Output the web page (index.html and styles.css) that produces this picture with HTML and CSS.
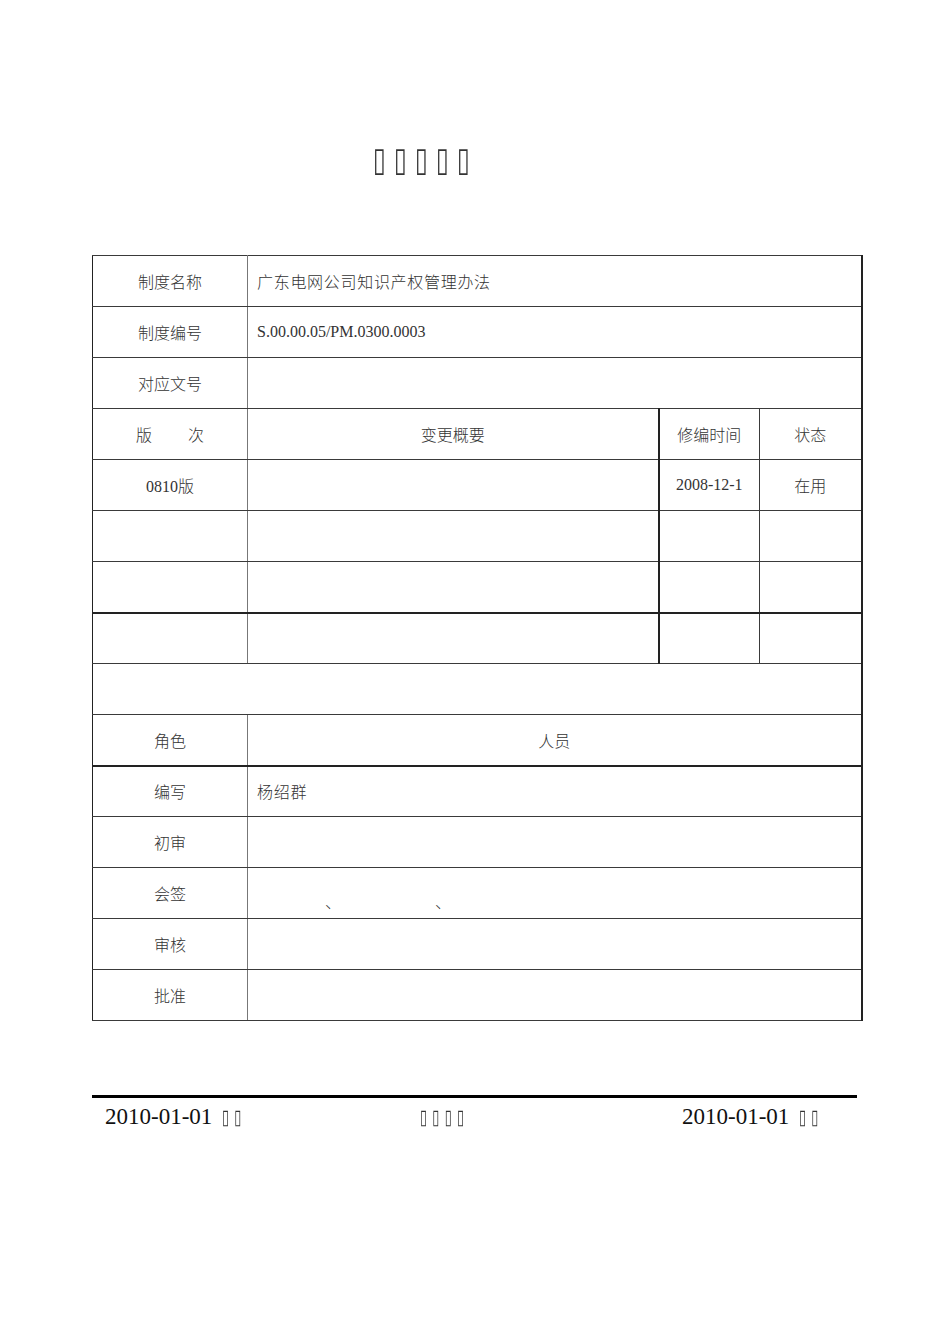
FILE: index.html
```html
<!DOCTYPE html>
<html lang="zh-CN">
<head>
<meta charset="utf-8">
<title>文件</title>
<link rel="stylesheet" href="styles.css">
</head>
<body>
<div class="page">
  <h1 class="title"><span class="tofu">▯▯▯▯▯</span></h1>
  <table class="sheet">
    <colgroup>
      <col class="c1"><col class="c2"><col class="c3"><col class="c4">
    </colgroup>
    <tr><td class="lab">制度名称</td><td class="val" colspan="3">广东电网公司知识产权管理办法</td></tr>
    <tr><td class="lab">制度编号</td><td class="val num" colspan="3">S.00.00.05/PM.0300.0003</td></tr>
    <tr><td class="lab">对应文号</td><td class="val" colspan="3"></td></tr>
    <tr><td class="lab">版<span class="gap"></span>次</td><td class="ctr">变更概要</td><td class="ctr thickl">修编时间</td><td class="ctr">状态</td></tr>
    <tr><td class="lab num">0810<span class="cjk">版</span></td><td></td><td class="ctr num thickl">2008-12-1</td><td class="ctr">在用</td></tr>
    <tr><td></td><td></td><td class="thickl"></td><td></td></tr>
    <tr class="thickb"><td></td><td></td><td class="thickl"></td><td></td></tr>
    <tr><td></td><td></td><td class="thickl"></td><td></td></tr>
    <tr><td colspan="4"></td></tr>
    <tr class="thickb"><td class="lab">角色</td><td class="ctr" colspan="3">人员</td></tr>
    <tr><td class="lab">编写</td><td class="val" colspan="3">杨绍群</td></tr>
    <tr><td class="lab">初审</td><td class="val" colspan="3"></td></tr>
    <tr><td class="lab">会签</td><td class="val sign" colspan="3"><span class="comma c-a">、</span><span class="comma c-b">、</span></td></tr>
    <tr><td class="lab">审核</td><td class="val" colspan="3"></td></tr>
    <tr><td class="lab">批准</td><td class="val" colspan="3"></td></tr>
  </table>
  <div class="rule"></div>
  <div class="foot">
    <span class="f-left">2010-01-01 <span class="tofu-s shift">▯▯</span></span>
    <span class="f-mid"><span class="tofu-s">▯▯▯▯</span></span>
    <span class="f-right">2010-01-01 <span class="tofu-s shift">▯▯</span></span>
  </div>
</div>
</body>
</html>
```
FILE: styles.css
```css
html, body {
  margin: 0;
  padding: 0;
  background: #ffffff;
}

.page {
  width: 950px;
  padding-left: 92px;
  box-sizing: border-box;
  font-family: "Liberation Serif", "Noto Sans CJK SC", serif;
  color: #333333;
}

.title {
  margin: 0;
  padding: 140px 0 0 281px;
  height: 255px;
  box-sizing: border-box;
  font-size: 28px;
  font-weight: normal;
  line-height: 38px;
  color: #111111;
}

.tofu {
  display: inline-block;
  font-family: "DejaVu Sans", sans-serif;
  font-size: 34px;
  letter-spacing: 12.6px;
  transform: scaleX(0.67);
  transform-origin: left center;
  color: #333333;
  filter: grayscale(1);
}

.tofu-s {
  display: inline-block;
  font-family: "DejaVu Sans", sans-serif;
  font-size: 21px;
  letter-spacing: 9px;
  transform: scaleX(0.6);
  transform-origin: left center;
  color: #333333;
  filter: grayscale(1);
}

.shift {
  margin-left: 4px;
}

.sheet {
  border-collapse: collapse;
  width: 769px;
  table-layout: fixed;
}

.c1 { width: 155px; }
.c2 { width: 411px; }
.c3 { width: 101px; }
.c4 { width: 102px; }

.sheet tr {
  height: 51px;
}

.sheet td {
  border: 1px solid #3a3a3a;
  padding: 0;
  font-size: 16px;
  font-family: "Noto Sans CJK SC", serif;
  font-weight: 300;
  color: #333333;
  vertical-align: middle;
}

.sheet td:first-child {
  border-left: 1px solid #222222;
  border-right: 1px solid #777777;
}

.sheet td:last-child {
  border-right: 2px solid #222222;
}

.sheet tr.thickb td {
  border-bottom: 2px solid #222222;
}

.sheet td.thickl {
  border-left: 2px solid #222222;
}

.lab {
  text-align: center;
}

.ctr {
  text-align: center;
}

.val {
  padding-left: 9px !important;
  text-align: left;
  letter-spacing: 0.7px;
}

.sheet td.num {
  font-family: "Liberation Serif", serif;
  font-weight: normal;
  font-size: 16px;
  letter-spacing: 0;
}

.cjk {
  font-family: "Noto Sans CJK SC", serif;
  font-weight: 300;
}

.gap {
  display: inline-block;
  width: 36px;
}

.sign {
  position: relative;
}

.comma {
  position: absolute;
  top: 25px;
  font-size: 16px;
  line-height: 16px;
}

.c-a { left: 77px; }
.c-b { left: 187px; }

.rule {
  margin-top: 74px;
  width: 765px;
  height: 3px;
  background: #000000;
}

.foot {
  display: flex;
  align-items: baseline;
  padding-left: 13px;
  padding-top: 6px;
  font-family: "Liberation Serif", serif;
  font-size: 23px;
  color: #111111;
}

.f-left { width: 315px; }
.f-mid { width: 262px; }
.f-right { }
```
